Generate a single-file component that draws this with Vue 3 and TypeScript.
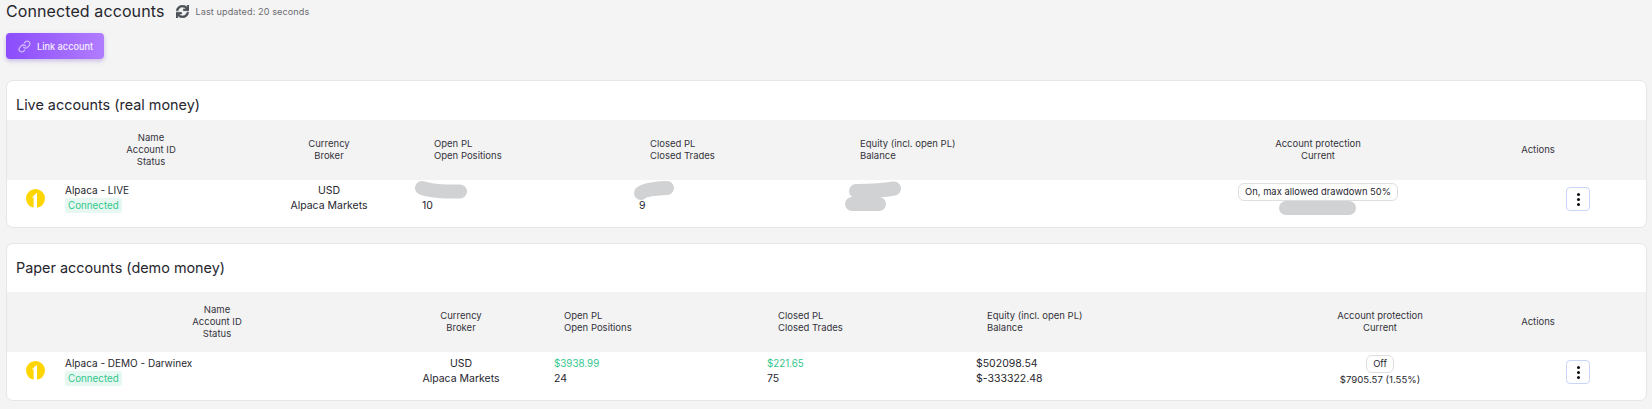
<script setup lang="ts">
interface Account {
  title: string;
  variant: string;
  name: string;
  openPl: string;
  positions: string;
  closedPl: string;
  trades: string;
  equity: string;
  balance: string;
  protection: string;
  current: string;
  blobs: string[];
}

const accounts: Account[] = [
  {
    title: 'Live accounts (real money)',
    variant: 'live',
    name: 'Alpaca - LIVE',
    openPl: '',
    positions: '10',
    closedPl: '',
    trades: '9',
    equity: '',
    balance: '',
    protection: 'On, max allowed drawdown 50%',
    current: '',
    blobs: [
      'M415 8 Q425 11 438 11.5 L453 11.5',
      'M634 13 Q638 9 660 8',
      'M849 11 Q873 11 887 8.5',
      'M845 24 L872 24',
      'M1279 28 L1342 28',
    ],
  },
  {
    title: 'Paper accounts (demo money)',
    variant: 'paper',
    name: 'Alpaca - DEMO - Darwinex',
    openPl: '$3938.99',
    positions: '24',
    closedPl: '$221.65',
    trades: '75',
    equity: '$502098.54',
    balance: '$-333322.48',
    protection: 'Off',
    current: '$7905.57 (1.55%)',
    blobs: [],
  },
];
</script>

<template>
  <div class="page">
    <header class="top">
      <h1>Connected accounts</h1>
      <svg class="sync" viewBox="0 0 512 512" aria-hidden="true">
        <path d="M440.65 12.57l4 82.77A247.16 247.16 0 0 0 255.83 8C134.73 8 33.91 94.92 12.29 209.82A12 12 0 0 0 24.09 224h49.05a12 12 0 0 0 11.67-9.26 175.91 175.91 0 0 1 317-56.94l-101.46-4.86a12 12 0 0 0-12.57 12v47.41a12 12 0 0 0 12 12H500a12 12 0 0 0 12-12V12a12 12 0 0 0-12-12h-47.37a12 12 0 0 0-11.98 12.57zM255.83 432a175.61 175.61 0 0 1-146-77.8l101.8 4.87a12 12 0 0 0 12.57-12v-47.4a12 12 0 0 0-12-12H12a12 12 0 0 0-12 12V500a12 12 0 0 0 12 12h47.35a12 12 0 0 0 12-12.6l-4.15-82.57A247.17 247.17 0 0 0 255.83 504c121.11 0 221.93-86.92 243.55-201.82a12 12 0 0 0-11.8-14.18h-49.05a12 12 0 0 0-11.67 9.26A175.86 175.86 0 0 1 255.83 432z" />
      </svg>
      <span class="updated">Last updated: 20 seconds</span>
    </header>

    <button class="link-btn" type="button">
      <svg viewBox="0 0 24 24" aria-hidden="true">
        <path d="M10 13a5 5 0 0 0 7.54.54l3-3a5 5 0 0 0-7.07-7.07l-1.72 1.71" />
        <path d="M14 11a5 5 0 0 0-7.54-.54l-3 3a5 5 0 0 0 7.07 7.07l1.71-1.71" />
      </svg>
      Link account
    </button>

    <section v-for="a in accounts" :key="a.variant" class="card" :class="a.variant">
      <h2>{{ a.title }}</h2>
      <table>
        <colgroup>
          <col class="c-logo" />
          <col class="c-name" />
          <col class="c-cur" />
          <col class="c-open" />
          <col class="c-closed" />
          <col class="c-eq" />
          <col class="c-prot" />
          <col class="c-act" />
        </colgroup>
        <thead>
          <tr>
            <th colspan="2" class="h-name">Name<br />Account ID<br />Status</th>
            <th>Currency<br />Broker</th>
            <th class="left p-open">Open PL<br />Open Positions</th>
            <th class="left p-closed">Closed PL<br />Closed Trades</th>
            <th class="left p-eq">Equity (incl. open PL)<br />Balance</th>
            <th class="p-prot">Account protection<br />Current</th>
            <th class="h-act">Actions</th>
          </tr>
        </thead>
        <tbody>
          <tr>
            <td class="logo-cell">
              <svg class="logo" viewBox="0 0 19 19" aria-hidden="true">
                <circle cx="9.5" cy="9.5" r="9.5" fill="#ffd500" />
                <path d="M10.6 4 L5.8 8.6 L7.6 8.6 L7.6 19 L11 19 L11 4.6 Z" fill="#fff" />
              </svg>
            </td>
            <td class="name-cell text-cell">
              <div class="line name">{{ a.name }}</div>
              <span class="status">Connected</span>
            </td>
            <td class="center text-cell">
              <div class="line">USD</div>
              <div class="line">Alpaca Markets</div>
            </td>
            <td class="d-open text-cell">
              <div class="line green">{{ a.openPl }}</div>
              <div class="line big">{{ a.positions }}</div>
            </td>
            <td class="d-closed text-cell">
              <div class="line green">{{ a.closedPl }}</div>
              <div class="line big">{{ a.trades }}</div>
            </td>
            <td class="d-eq text-cell">
              <div class="line">{{ a.equity }}</div>
              <div class="line">{{ a.balance }}</div>
            </td>
            <td class="center p-prot">
              <span class="pill">{{ a.protection }}</span>
              <div class="line current">{{ a.current }}</div>
            </td>
            <td class="act-cell">
              <button class="kebab" type="button" aria-label="Actions">
                <i></i><i></i><i></i>
              </button>
            </td>
          </tr>
        </tbody>
      </table>
      <svg v-if="a.blobs.length" class="blobs" viewBox="0 0 1639 47" aria-hidden="true">
        <path v-for="d in a.blobs" :key="d" :d="d" />
      </svg>
    </section>
  </div>
</template>

<style>
html,
body {
  margin: 0;
  background: #f4f4f4;
}
</style>

<style scoped>
.page {
  box-sizing: border-box;
  width: 1652px;
  height: 409px;
  padding: 0 5px 0 6px;
  overflow: hidden;
  background: #f4f4f4;
  color: #26262e;
  font-family: Inter, "Liberation Sans", sans-serif;
}
.top {
  display: flex;
  align-items: center;
  height: 22px;
}
h1 {
  margin: 0;
  font-size: 16px;
  font-weight: 400;
  line-height: 22px;
  letter-spacing: 0.1px;
}
.sync {
  width: 13px;
  height: 13px;
  margin-left: 12px;
  fill: #4a5056;
  stroke: #4a5056;
  stroke-width: 24;
}
.updated {
  margin-left: 6px;
  font-size: 9.1px;
  color: #6c6c72;
  letter-spacing: 0.1px;
}
.link-btn {
  display: flex;
  align-items: center;
  gap: 6px;
  box-sizing: border-box;
  width: 98px;
  height: 26px;
  margin: 11px 0 21px;
  padding: 0 0 0 12px;
  border: 0;
  border-radius: 4px;
  background: linear-gradient(90deg, #8b4cfb, #b17dff);
  box-shadow: 0 2px 4px rgba(120, 80, 200, 0.35);
  color: #f4eeff;
  font: 500 9.2px Inter, "Liberation Sans", sans-serif;
}
.link-btn svg {
  width: 13px;
  height: 13px;
  fill: none;
  stroke: #dac9ff;
  stroke-width: 2;
  stroke-linecap: round;
  stroke-linejoin: round;
}
.card {
  position: relative;
  box-sizing: border-box;
  margin-bottom: 15px;
  border: 1px solid #e6e6e6;
  border-radius: 7px;
  background: #fff;
  overflow: hidden;
}
h2 {
  margin: 0;
  padding: 16px 0 0 9px;
  font-size: 14.4px;
  font-weight: 400;
  line-height: 16px;
}
.live h2 {
  height: 23px;
}
.paper h2 {
  height: 32px;
}
table {
  width: 1639px;
  table-layout: fixed;
  border-collapse: collapse;
  font-size: 10.5px;
}
thead tr {
  height: 60px;
  background: #f3f3f3;
}
th {
  padding: 0;
  font-size: 9.5px;
  font-weight: 400;
  line-height: 12px;
  text-align: center;
  color: #33333c;
}
th.left {
  text-align: left;
}
td {
  padding: 3px 0 0;
  vertical-align: top;
}
.paper .text-cell {
  padding-top: 4px;
}
.live tbody tr {
  height: 47px;
}
.paper tbody tr {
  height: 48px;
}
.line {
  min-height: 15px;
  line-height: 15px;
  white-space: nowrap;
}
.name {
  font-size: 10px;
}
.center {
  text-align: center;
}
.green {
  color: #33c78d;
  font-size: 9.8px;
}
.big {
  font-size: 10.5px;
}
.logo-cell {
  padding: 9px 0 0 19px;
}
.logo {
  display: block;
  width: 19px;
  height: 19px;
}
.name-cell {
  padding-left: 10px;
}
.status {
  display: block;
  width: fit-content;
  height: 15px;
  padding: 0 3px;
  border-radius: 2px;
  background: #e6f8f1;
  color: #33c78d;
  font-size: 9.8px;
  line-height: 15px;
}
.pill {
  display: inline-block;
  box-sizing: border-box;
  height: 18px;
  padding: 0 6px;
  border: 1px solid #dedede;
  border-radius: 6px;
  background: #fff;
  font-size: 9.4px;
  line-height: 16px;
  white-space: nowrap;
}
.current {
  margin-top: -1px;
  font-size: 9.6px;
}
.kebab {
  display: flex;
  flex-direction: column;
  align-items: center;
  justify-content: center;
  gap: 2px;
  box-sizing: border-box;
  width: 24px;
  height: 24px;
  padding: 0;
  border: 1px solid #c9d5f9;
  border-radius: 4px;
  background: #fff;
}
.kebab i {
  display: block;
  width: 3px;
  height: 3px;
  border-radius: 50%;
  background: #111;
}
.act-cell {
  padding: 7px 0 0 60px;
}
.paper .act-cell {
  padding-top: 8px;
}
.h-act {
  padding-right: 76px;
}

/* Live account columns */
.live .c-logo { width: 48px; }
.live .c-name { width: 232px; }
.live .c-cur { width: 84px; }
.live .c-open { width: 256px; }
.live .c-closed { width: 209px; }
.live .c-eq { width: 294px; }
.live .c-prot { width: 376px; }
.live .c-act { width: 140px; }
.live .h-name { padding-left: 8px; }
.live .p-open { padding-left: 63px; }
.live .d-open { padding-left: 51px; }
.live .p-closed { padding-left: 23px; }
.live .d-closed { padding-left: 12px; }
.live .p-eq { padding-left: 24px; }
.live .d-eq { padding-left: 10px; }

/* Paper account columns */
.paper .c-logo { width: 48px; }
.paper .c-name { width: 354px; }
.paper .c-cur { width: 104px; }
.paper .c-open { width: 242px; }
.paper .c-closed { width: 210px; }
.paper .c-eq { width: 235px; }
.paper .c-prot { width: 306px; }
.paper .c-act { width: 140px; }
.paper .h-name { padding-left: 18px; }
.paper .p-open { padding-left: 51px; }
.paper .d-open { padding-left: 41px; }
.paper .p-closed { padding-left: 23px; }
.paper .d-closed { padding-left: 12px; }
.paper .p-eq { padding-left: 22px; }
.paper .d-eq { padding-left: 11px; }
.paper .p-prot { padding-left: 54px; }

.blobs {
  position: absolute;
  left: 0;
  top: 99px;
  width: 1639px;
  height: 47px;
  fill: none;
  stroke: #d1d2d4;
  stroke-width: 14;
  stroke-linecap: round;
  stroke-linejoin: round;
}
</style>
